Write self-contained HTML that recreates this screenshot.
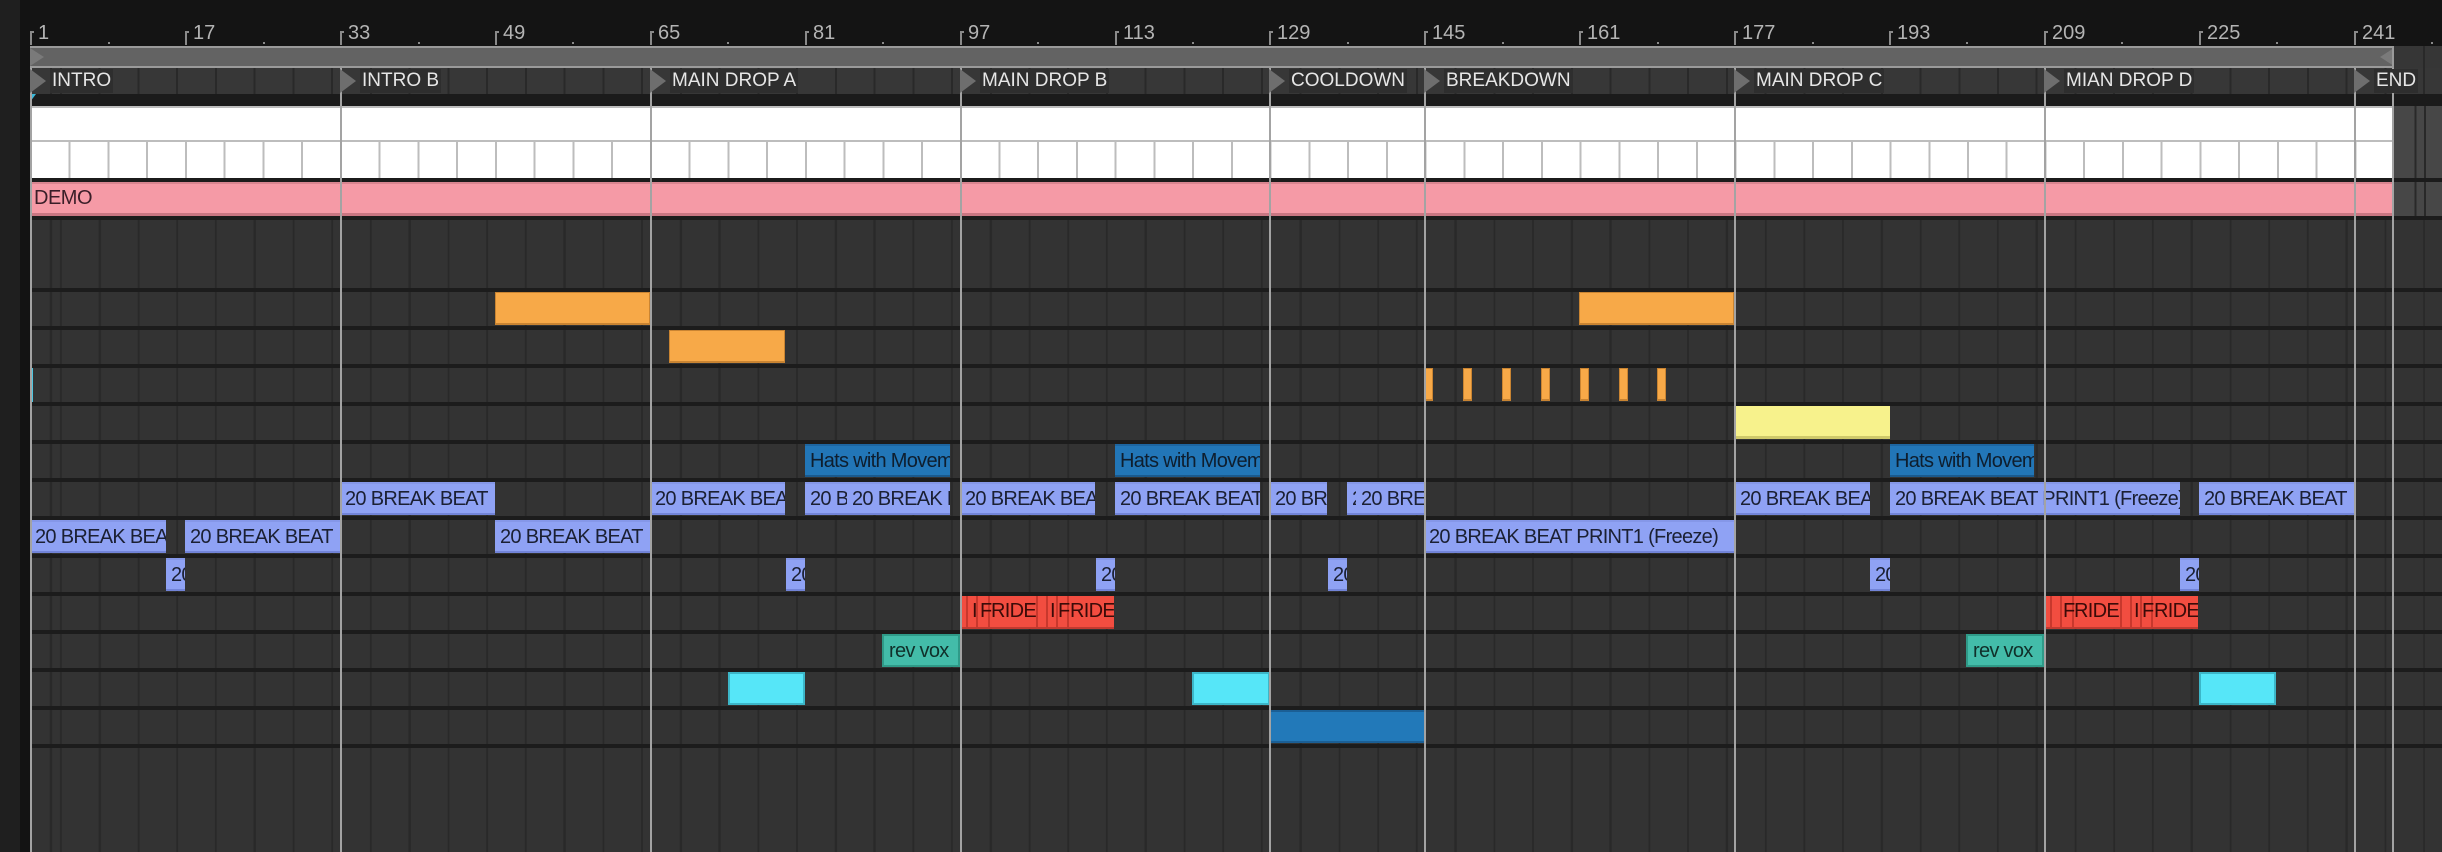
<!DOCTYPE html>
<html><head><meta charset="utf-8"><style>
*{margin:0;padding:0;box-sizing:border-box}
body{width:2442px;height:852px;background:#141414;position:relative;overflow:hidden;font-family:"Liberation Sans",sans-serif}
.a{position:absolute}
.grid{background-image:repeating-linear-gradient(to right,#292929 0 2px,transparent 2px 38.74px);background-position:30px 0}
.num{position:absolute;top:21px;color:#b4b4b4;font-size:20px;line-height:24px}
.tk{position:absolute;top:31px;width:2px;height:14px;background:#8a8a8a}
.tk:after{content:"";position:absolute;left:0;top:0;width:4px;height:2px;background:#8a8a8a}
.dot{position:absolute;top:42px;width:2px;height:2px;background:#8a8a8a}
.loc{position:absolute;top:68px;height:26px}
.loc i{position:absolute;left:0;top:1px;width:0;height:0;border-top:12px solid transparent;border-bottom:12px solid transparent;border-left:16px solid #6e6e6e}
.loc span{position:absolute;left:20px;top:1px;height:24px;line-height:24px;padding:0 2px;background:#2e2e2e;color:#e6e6e6;font-size:19px;white-space:nowrap}
.vl{position:absolute;top:68px;width:2px;height:784px;background:#a3a3a3}
.sep{position:absolute;left:30px;width:2412px;height:4px;background:#1c1c1c}
.c{position:absolute;height:33px;overflow:hidden;white-space:nowrap;font-size:20px;letter-spacing:-0.7px;line-height:30px;padding-left:5px}
.bb{background:#8fa2f4;border-top:2px solid #8597e8;border-bottom:2px solid #7284d8;color:#1b2033}
.or{background:#f7a948;border:1px solid #c98432;border-bottom-width:2px}
.ye{background:#f7f28c;border-bottom:3px solid #cfc96a}
.hb{background:#2276b7;border-top:2px solid #1d65a0;border-bottom:2px solid #1a5a8e;color:#0e1e2e}
.cy{background:#56e6f8;border:2px solid #3cb6c8}
.dbl{background:#2279b9;border-top:2px solid #1b5f95;border-bottom:2px solid #1b5f95}
.tl{background:#43bca9;border:2px solid #2f9a88;color:#10302a}
.rd{background:#f24d40;border-bottom:2px solid #c23a30;color:#3a0b08}
.rd b{position:absolute;top:0;width:2px;height:31px;background:#c8382d}
</style></head><body>
<div class="a" style="left:0;top:0;width:20px;height:852px;background:#1f1f1f"></div>
<div class="a" style="left:20px;top:0;width:10px;height:852px;background:#131313"></div>

<div class="tk" style="left:30px"></div><div class="num" style="left:38px">1</div>
<div class="tk" style="left:185px"></div><div class="num" style="left:193px">17</div>
<div class="tk" style="left:340px"></div><div class="num" style="left:348px">33</div>
<div class="tk" style="left:495px"></div><div class="num" style="left:503px">49</div>
<div class="tk" style="left:650px"></div><div class="num" style="left:658px">65</div>
<div class="tk" style="left:805px"></div><div class="num" style="left:813px">81</div>
<div class="tk" style="left:960px"></div><div class="num" style="left:968px">97</div>
<div class="tk" style="left:1115px"></div><div class="num" style="left:1123px">113</div>
<div class="tk" style="left:1269px"></div><div class="num" style="left:1277px">129</div>
<div class="tk" style="left:1424px"></div><div class="num" style="left:1432px">145</div>
<div class="tk" style="left:1579px"></div><div class="num" style="left:1587px">161</div>
<div class="tk" style="left:1734px"></div><div class="num" style="left:1742px">177</div>
<div class="tk" style="left:1889px"></div><div class="num" style="left:1897px">193</div>
<div class="tk" style="left:2044px"></div><div class="num" style="left:2052px">209</div>
<div class="tk" style="left:2199px"></div><div class="num" style="left:2207px">225</div>
<div class="tk" style="left:2354px"></div><div class="num" style="left:2362px">241</div>
<div class="dot" style="left:108px"></div><div class="dot" style="left:263px"></div><div class="dot" style="left:418px"></div><div class="dot" style="left:572px"></div><div class="dot" style="left:727px"></div><div class="dot" style="left:882px"></div><div class="dot" style="left:1037px"></div><div class="dot" style="left:1192px"></div><div class="dot" style="left:1347px"></div><div class="dot" style="left:1502px"></div><div class="dot" style="left:1657px"></div><div class="dot" style="left:1812px"></div><div class="dot" style="left:1966px"></div><div class="dot" style="left:2121px"></div><div class="dot" style="left:2276px"></div><div class="dot" style="left:2431px"></div>

<div class="a grid" style="left:30px;top:46px;width:2412px;height:22px;background-color:#363636"></div>
<div class="a" style="left:30px;top:46px;width:2364px;height:22px;background:#636363;border-top:2px solid #9a9a9a;border-bottom:2px solid #9a9a9a"></div>
<div class="a" style="left:30px;top:48px;width:0;height:0;border-top:9px solid transparent;border-bottom:9px solid transparent;border-left:14px solid #7a7a7a"></div>
<div class="a" style="left:2380px;top:48px;width:0;height:0;border-top:9px solid transparent;border-bottom:9px solid transparent;border-right:14px solid #7a7a7a"></div>
<div class="a" style="left:2392px;top:46px;width:2px;height:22px;background:#9a9a9a"></div>

<div class="a grid" style="left:30px;top:68px;width:2412px;height:26px;background-color:#373737"></div>
<div class="a" style="left:30px;top:94px;width:2412px;height:14px;background:#1b1b1b"></div>
<div class="a" style="left:30px;top:94px;width:0;height:0;border-top:8px solid #3ab8d8;border-right:6px solid transparent"></div>

<div class="a" style="left:30px;top:106px;width:2364px;height:2px;background:#bdbdbd"></div>
<div class="a" style="left:30px;top:108px;width:2364px;height:32px;background:#fff"></div>
<div class="a" style="left:30px;top:140px;width:2364px;height:2px;background:#bdbdbd"></div>
<div class="a" style="left:30px;top:142px;width:2364px;height:36px;background-color:#fff;background-image:repeating-linear-gradient(to right,#bdbdbd 0 2px,transparent 2px 38.74px);background-position:0 0"></div>
<div class="a grid" style="left:2394px;top:106px;width:48px;height:72px;background-color:#474747"></div>
<div class="a" style="left:30px;top:178px;width:2412px;height:4px;background:#1b1b1b"></div>

<div class="a" style="left:30px;top:182px;width:2364px;height:34px;background:#f59aa6;border-top:2px solid #d88590;border-bottom:3px solid #c97682;color:#3a1e28;font-size:20px;letter-spacing:-0.5px;line-height:29px;padding-left:4px">DEMO</div>
<div class="a grid" style="left:2394px;top:182px;width:48px;height:34px;background-color:#474747"></div>
<div class="sep" style="top:216px"></div>

<div class="a grid" style="left:30px;top:220px;width:2412px;height:632px;background-color:#333"></div>
<div class="sep" style="top:288px"></div><div class="sep" style="top:326px"></div><div class="sep" style="top:364px"></div><div class="sep" style="top:402px"></div><div class="sep" style="top:440px"></div><div class="sep" style="top:478px"></div><div class="sep" style="top:516px"></div><div class="sep" style="top:554px"></div><div class="sep" style="top:592px"></div><div class="sep" style="top:630px"></div><div class="sep" style="top:668px"></div><div class="sep" style="top:706px"></div><div class="sep" style="top:744px"></div>
<div class="a" style="left:30px;top:368px;width:3px;height:34px;background:#4ec6e0"></div>

<div class="c or" style="left:495px;top:292px;width:155px"></div>
<div class="c or" style="left:1579px;top:292px;width:155px"></div>
<div class="c or" style="left:669px;top:330px;width:116px"></div>
<div class="c or" style="left:1424px;top:368px;width:9px"></div>
<div class="c or" style="left:1463px;top:368px;width:9px"></div>
<div class="c or" style="left:1502px;top:368px;width:9px"></div>
<div class="c or" style="left:1541px;top:368px;width:9px"></div>
<div class="c or" style="left:1580px;top:368px;width:9px"></div>
<div class="c or" style="left:1619px;top:368px;width:9px"></div>
<div class="c or" style="left:1657px;top:368px;width:9px"></div>
<div class="c ye" style="left:1735px;top:406px;width:155px"></div>
<div class="c hb" style="left:805px;top:444px;width:145px">Hats with Movement</div>
<div class="c hb" style="left:1115px;top:444px;width:145px">Hats with Movement</div>
<div class="c hb" style="left:1890px;top:444px;width:144px">Hats with Movement</div>

<div class="c bb" style="left:340px;top:482px;width:155px">20 BREAK BEAT</div>
<div class="c bb" style="left:650px;top:482px;width:135px">20 BREAK BEAT</div>
<div class="c bb" style="left:805px;top:482px;width:42px">20 BREAK</div>
<div class="c bb" style="left:847px;top:482px;width:103px">20 BREAK BEAT</div>
<div class="c bb" style="left:960px;top:482px;width:135px">20 BREAK BEAT</div>
<div class="c bb" style="left:1115px;top:482px;width:145px">20 BREAK BEAT</div>
<div class="c bb" style="left:1270px;top:482px;width:57px">20 BREAK</div>
<div class="c bb" style="left:1347px;top:482px;width:9px">20</div>
<div class="c bb" style="left:1356px;top:482px;width:68px">20 BREAK</div>
<div class="c bb" style="left:1735px;top:482px;width:135px">20 BREAK BEAT</div>
<div class="c bb" style="left:1890px;top:482px;width:290px">20 BREAK BEAT PRINT1 (Freeze)</div>
<div class="c bb" style="left:2199px;top:482px;width:155px">20 BREAK BEAT</div>

<div class="c bb" style="left:30px;top:520px;width:136px">20 BREAK BEAT</div>
<div class="c bb" style="left:185px;top:520px;width:155px">20 BREAK BEAT</div>
<div class="c bb" style="left:495px;top:520px;width:155px">20 BREAK BEAT</div>
<div class="c bb" style="left:1424px;top:520px;width:310px">20 BREAK BEAT PRINT1 (Freeze)</div>

<div class="c bb" style="left:166px;top:558px;width:19px">20</div>
<div class="c bb" style="left:786px;top:558px;width:19px">20</div>
<div class="c bb" style="left:1096px;top:558px;width:19px">20</div>
<div class="c bb" style="left:1328px;top:558px;width:19px">20</div>
<div class="c bb" style="left:1870px;top:558px;width:20px">20</div>
<div class="c bb" style="left:2180px;top:558px;width:19px">20</div>

<div class="c rd" style="left:960px;top:596px;width:154px;padding-left:0">
<b style="left:6px"></b><b style="left:16px"></b><b style="left:28px"></b><b style="left:76px"></b><b style="left:86px"></b><b style="left:96px"></b><b style="left:107px"></b>
<span class="a" style="left:12px">I</span><span class="a" style="left:20px">F</span><span class="a" style="left:31px">RIDE</span><span class="a" style="left:90px">I</span><span class="a" style="left:98px">F</span><span class="a" style="left:110px">RIDE</span></div>
<div class="c rd" style="left:2044px;top:596px;width:154px;padding-left:0">
<b style="left:6px"></b><b style="left:16px"></b><b style="left:28px"></b><b style="left:76px"></b><b style="left:86px"></b><b style="left:96px"></b><b style="left:107px"></b>
<span class="a" style="left:19px">F</span><span class="a" style="left:30px">RIDE</span><span class="a" style="left:90px">I</span><span class="a" style="left:98px">F</span><span class="a" style="left:110px">RIDE</span></div>

<div class="c tl" style="left:882px;top:634px;width:78px">rev vox</div>
<div class="c tl" style="left:1966px;top:634px;width:78px">rev vox</div>

<div class="c cy" style="left:728px;top:672px;width:77px"></div>
<div class="c cy" style="left:1192px;top:672px;width:78px"></div>
<div class="c cy" style="left:2199px;top:672px;width:77px"></div>
<div class="c dbl" style="left:1271px;top:710px;width:153px"></div>

<div class="vl" style="left:30px"></div>
<div class="vl" style="left:340px"></div>
<div class="vl" style="left:650px"></div>
<div class="vl" style="left:960px"></div>
<div class="vl" style="left:1269px"></div>
<div class="vl" style="left:1424px"></div>
<div class="vl" style="left:1734px"></div>
<div class="vl" style="left:2044px"></div>
<div class="vl" style="left:2354px"></div>
<div class="a" style="left:2392px;top:68px;width:2px;height:784px;background:#a3a3a3"></div>

<div class="loc" style="left:30px"><i></i><span>INTRO</span></div>
<div class="loc" style="left:340px"><i></i><span>INTRO B</span></div>
<div class="loc" style="left:650px"><i></i><span>MAIN DROP A</span></div>
<div class="loc" style="left:960px"><i></i><span>MAIN DROP B</span></div>
<div class="loc" style="left:1269px"><i></i><span>COOLDOWN</span></div>
<div class="loc" style="left:1424px"><i></i><span>BREAKDOWN</span></div>
<div class="loc" style="left:1734px"><i></i><span>MAIN DROP C</span></div>
<div class="loc" style="left:2044px"><i></i><span>MIAN DROP D</span></div>
<div class="loc" style="left:2354px"><i></i><span>END</span></div>
</body></html>
